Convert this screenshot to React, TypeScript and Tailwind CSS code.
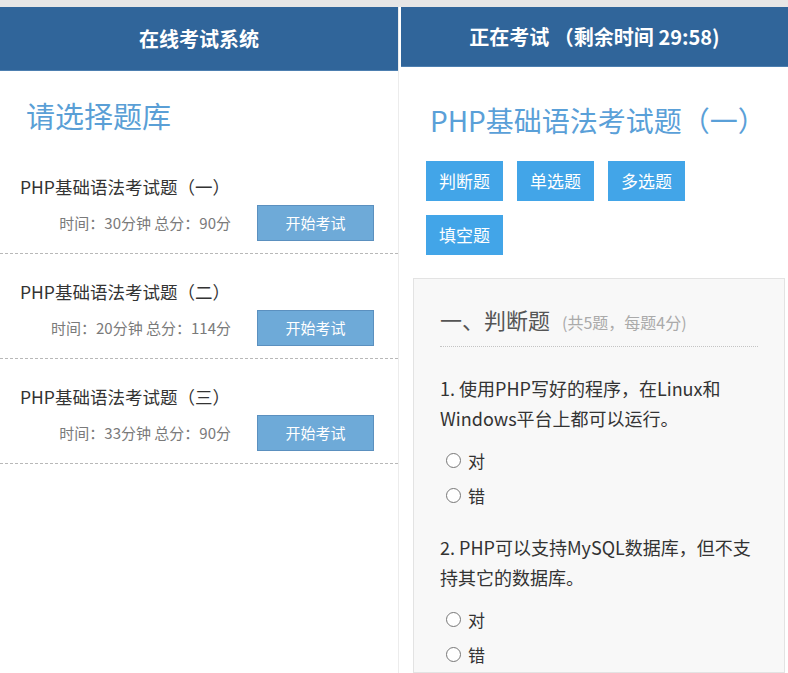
import React from 'react';

const FONT = { fontFamily: '"Noto Sans CJK SC", "Liberation Sans", sans-serif' };

const papers = [
  { title: 'PHP基础语法考试题（一）', info: '时间：30分钟 总分：90分' },
  { title: 'PHP基础语法考试题（二）', info: '时间：20分钟 总分：114分' },
  { title: 'PHP基础语法考试题（三）', info: '时间：33分钟 总分：90分' },
];

const types = ['判断题', '单选题', '多选题', '填空题'];

const questions = [
  { lines: ['1. 使用PHP写好的程序，在Linux和', 'Windows平台上都可以运行。'] },
  { lines: ['2. PHP可以支持MySQL数据库，但不支', '持其它的数据库。'] },
];

const Header: React.FC<{ text: string }> = ({ text }) => (
  <div className="h-[64px] bg-[#30659a] border-b border-[#4d7fb0] flex items-center justify-center text-white text-[20px] font-bold">
    {text}
  </div>
);

const Radio: React.FC<{ label: string }> = ({ label }) => (
  <div className="h-[35px] flex items-center gap-[7px] pl-[6px] text-[17px] text-[#333]">
    <span className="w-[15px] h-[15px] rounded-full border border-[#777] bg-white" />
    <span>{label}</span>
  </div>
);

function PaperList() {
  return (
    <div className="w-[399px] h-full flex flex-col bg-white border-r border-[#ececec]">
      <Header text="在线考试系统" />
      <h1 className="mt-[26px] pl-[26px] text-[29px] leading-[36px] text-[#5a9fd6]">请选择题库</h1>
      <div className="mt-[16px]">
        {papers.map((p) => (
          <div key={p.title} className="pt-[26px] pb-[12px] border-b border-dashed border-[#b8b8b8]">
            <div className="pl-[20px] text-[17.5px] leading-[24px] text-[#333]">{p.title}</div>
            <div className="mt-[6px] flex items-center justify-end pr-[24px] gap-[26px]">
              <span className="text-[15px] text-[#7a7a7a]">{p.info}</span>
              <button className="w-[117px] h-[36px] bg-[#6eaad8] border border-[#5b90bf] text-white text-[15px]">
                开始考试
              </button>
            </div>
          </div>
        ))}
      </div>
    </div>
  );
}

function ExamPanel() {
  return (
    <div className="flex-1 h-full flex flex-col bg-white">
      <Header text="正在考试 （剩余时间 29:58)" />
      <h1 className="mt-[35px] pl-[29px] text-[28px] leading-[36px] text-[#5aa0d8]">PHP基础语法考试题（一）</h1>
      <div className="mt-[23px] pl-[25px] pr-[60px] flex flex-wrap gap-x-[14px] gap-y-[14px]">
        {types.map((t) => (
          <button key={t} className="w-[77px] h-[40px] bg-[#42a5e8] text-white text-[17px]">
            {t}
          </button>
        ))}
      </div>
      <div className="mt-[23px] ml-[12px] mr-[3px] flex-1 bg-[#f8f8f8] border border-[#e3e3e3] pt-[24px] px-[26px]">
        <div className="flex items-baseline gap-[12px] pb-[10px] border-b border-dotted border-[#c4c4c4]">
          <span className="text-[22px] text-[#555]">一、判断题</span>
          <span className="text-[16px] text-[#aaa]">(共5题，每题4分)</span>
        </div>
        {questions.map((q, i) => (
          <div key={i} className={i === 0 ? 'mt-[26px]' : 'mt-[19px]'}>
            {q.lines.map((l) => (
              <div key={l} className="text-[18px] leading-[30px] text-[#333]">{l}</div>
            ))}
            <div className="mt-[10px]">
              <Radio label="对" />
              <Radio label="错" />
            </div>
          </div>
        ))}
      </div>
    </div>
  );
}

export default function App() {
  return (
    <div style={FONT} className="w-[788px] h-[673px] overflow-hidden bg-white flex flex-col">
      <div className="h-[7px] bg-[#e6e6e6]" />
      <div className="flex-1 flex gap-[2px] min-h-0">
        <PaperList />
        <ExamPanel />
      </div>
    </div>
  );
}
